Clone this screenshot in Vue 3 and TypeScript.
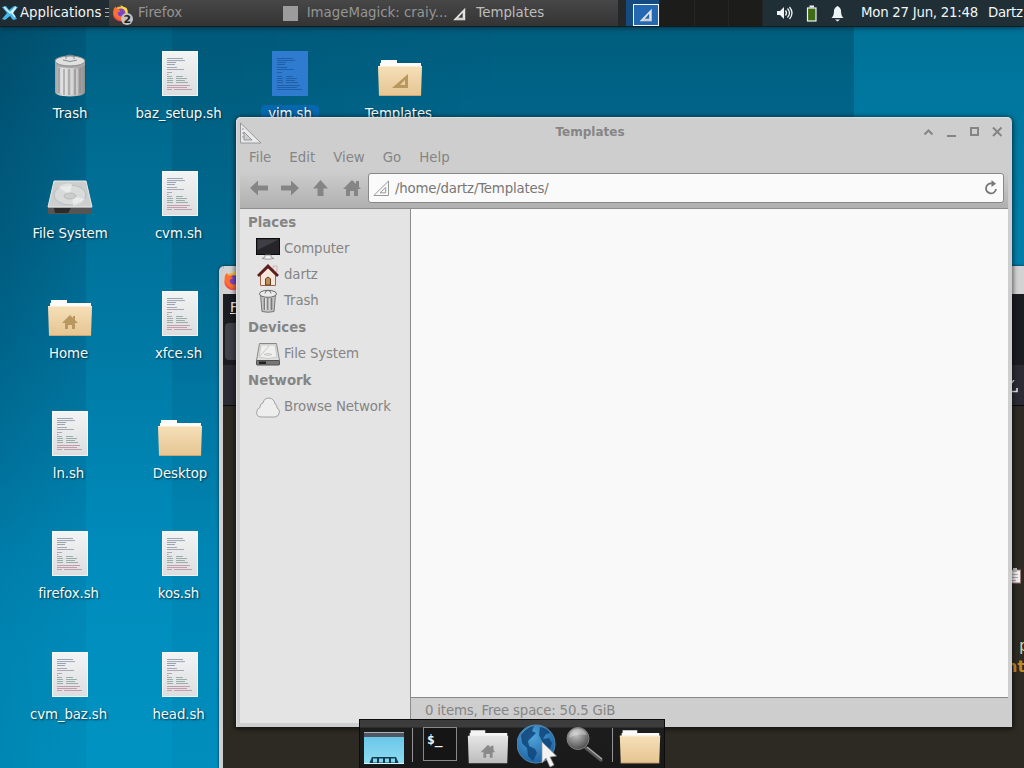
<script setup lang="ts">
interface DesktopItem {
  name: string
  icon: string
  nudge?: boolean
  selected?: boolean
}

const columns: DesktopItem[][] = [
  [
    { name: 'Trash', icon: 'trash' },
    { name: 'File System', icon: 'drive' },
    { name: 'Home', icon: 'folder-home', nudge: true },
    { name: 'ln.sh', icon: 'script', nudge: true },
    { name: 'firefox.sh', icon: 'script', nudge: true },
    { name: 'cvm_baz.sh', icon: 'script', nudge: true },
  ],
  [
    { name: 'baz_setup.sh', icon: 'script', nudge: true },
    { name: 'cvm.sh', icon: 'script', nudge: true },
    { name: 'xfce.sh', icon: 'script', nudge: true },
    { name: 'Desktop', icon: 'folder' },
    { name: 'kos.sh', icon: 'script', nudge: true },
    { name: 'head.sh', icon: 'script', nudge: true },
  ],
  [{ name: 'vim.sh', icon: 'script-selected', selected: true }],
  [{ name: 'Templates', icon: 'folder-templates', nudge: true }],
]

const menus: string[] = ['File', 'Edit', 'View', 'Go', 'Help']

const places = [
  {
    title: 'Places',
    items: [
      { name: 'Computer', icon: 'computer' },
      { name: 'dartz', icon: 'house' },
      { name: 'Trash', icon: 'bin' },
    ],
  },
  { title: 'Devices', items: [{ name: 'File System', icon: 'disk' }] },
  { title: 'Network', items: [{ name: 'Browse Network', icon: 'cloud' }] },
]
</script>

<template>
  <div class="screen">
    <svg class="defs" width="0" height="0">
      <defs>
        <linearGradient id="paper" x1="0" y1="0" x2="0" y2="1"><stop offset="0" stop-color="#f3f4f4" /><stop offset="1" stop-color="#dcdddf" /></linearGradient>
        <linearGradient id="tan" x1="0" y1="0" x2="0" y2="1"><stop offset="0" stop-color="#f6dfb8" /><stop offset="1" stop-color="#e5c592" /></linearGradient>
        <linearGradient id="silver" x1="0" y1="0" x2="0" y2="1"><stop offset="0" stop-color="#e6e6e6" /><stop offset="1" stop-color="#bcbcbc" /></linearGradient>
        <linearGradient id="can" x1="0" y1="0" x2="1" y2="0"><stop offset="0" stop-color="#a0a0a0" /><stop offset=".25" stop-color="#dfdfdf" /><stop offset=".6" stop-color="#c8c8c8" /><stop offset="1" stop-color="#8f8f8f" /></linearGradient>
        <linearGradient id="sky" x1="0" y1="0" x2="0" y2="1"><stop offset="0" stop-color="#63c3e6" /><stop offset="1" stop-color="#8fdcf2" /></linearGradient>
        <radialGradient id="globe" cx=".4" cy=".3" r=".8"><stop offset="0" stop-color="#51a5dc" /><stop offset="1" stop-color="#155a9c" /></radialGradient>
        <radialGradient id="lens" cx=".4" cy=".3" r=".7"><stop offset="0" stop-color="#c8c8c8" /><stop offset="1" stop-color="#4e4e4e" /></radialGradient>
        <linearGradient id="flame" x1=".8" y1="0" x2=".2" y2="1"><stop offset="0" stop-color="#ffd93a" /><stop offset=".5" stop-color="#ff8a28" /><stop offset="1" stop-color="#f0355a" /></linearGradient>
      </defs>
      <symbol id="script" viewBox="0 0 48 48">
        <rect x="6" y="1" width="36" height="45" fill="url(#paper)" />
        <path d="M6.500 1.500h35v44h-35z" fill="none" stroke="#fff" stroke-opacity=".6" />
        <g fill="none" stroke-width=".8" opacity=".72">
          <path stroke="#5f6f8c" d="M11 8.500h16M11 10.600h18M11 12.500h9M11 14.500h8" />
          <path stroke="#80738e" d="M11 17.500h10M11 19.500h17M11 22.500h5M11 24.500h1.500" />
          <path stroke="#668478" d="M11 26.500h5M20 26.500h7M11 28.500h6M20 28.500h11M11 30.500h6M20 30.500h9M11 32.500h6M20 32.500h12" />
          <path stroke="#b06b85" d="M11 35.500h23M11 37.500h20M11 39.500h5M18 39.500h18" />
        </g>
      </symbol>
      <symbol id="script-selected" viewBox="0 0 48 48">
        <rect x="6" y="1" width="36" height="45" fill="#2f7bd0" />
        <path d="M11 8.500h16M11 10.500h18M11 12.500h9M11 14.500h8M11 17.500h10M11 19.500h17M11 22.500h5M11 26.500h5M20 26.500h7M11 28.500h6M20 28.500h11M11 30.500h6M20 30.500h9M11 32.500h6M20 32.500h12M11 35.500h23M11 37.500h20M11 39.500h25" stroke="#1d559c" stroke-width=".9" opacity=".85" />
      </symbol>
      <symbol id="folder" viewBox="0 0 48 48">
        <path d="M5 10h16v3h24v6H4v-6h1z" fill="#fbfbfa" />
        <path d="M2 16h44v1l-1 29H3L2 17z" fill="url(#tan)" /><path d="M2 16.500h44" stroke="#fbecd0" />
        <path d="M3 45.500h42" stroke="#cfa66f" />
      </symbol>
      <symbol id="folder-home" viewBox="0 0 48 48">
        <use href="#folder" width="48" height="48" />
        <path d="M16 33l8-8 3 3v-2h2v4l3 3h-3v6h-3v-4h-4v4h-3v-6z" fill="#b99860" />
      </symbol>
      <symbol id="folder-templates" viewBox="0 0 48 48">
        <use href="#folder" width="48" height="48" />
        <path fill-rule="evenodd" d="M16 38L32 24v14zm8-3h5v-5z" fill="#b99860" />
      </symbol>
      <symbol id="folder-silver" viewBox="0 0 48 48">
        <path d="M5 10h16v3h24v6H4v-6h1z" fill="#f4f4f4" />
        <path d="M2 16h44l-1 30H3z" fill="url(#silver)" />
        <path d="M16 34l8-8 3 3v-2h3v5l2 2h-3v6h-3v-4h-4v4h-3v-6z" fill="#8a8a8a" />
      </symbol>
      <symbol id="trash" viewBox="0 0 48 48">
        <path d="M9 11h30v31q0 4-15 4.500Q9 46 9 42z" fill="url(#can)" />
        <path d="M13 18v25M18 19v26M23 19v26M29 19v26M34 18v25" stroke="#808080" stroke-opacity=".45" stroke-width="2" />
        <path d="M15 18v25M20 19v26M26 19v26M31 19v26" stroke="#eee" stroke-opacity=".7" />
        <path d="M9 12v3q3 3 15 3t15-3v-3" fill="#a9a9a9" />
        <ellipse cx="24" cy="11" rx="15" ry="5" fill="#dfe0e0" stroke="#8c8f90" />
        <path d="M20 9V6q4-2 8 0v3M17 10q7 3 14 0" fill="none" stroke="#8a8a8a" />
      </symbol>
      <symbol id="drive" viewBox="0 0 48 48">
        <path d="M8 11h32l6 26H2z" fill="#cccfce" stroke="#e9e9e9" />
        <ellipse cx="24" cy="25" rx="16" ry="10" fill="#d9dbda" stroke="#b4b6b6" stroke-width=".8" />
        <path d="M24 25L12 17q7-5 14-3zM26 26l13 3q-5 6-12 7z" fill="#f3f3f3" opacity=".6" />
        <ellipse cx="24" cy="26" rx="6" ry="3" fill="#cbcdcd" stroke="#b2b2b2" stroke-width=".8" />
        <path d="M2 37h44v6q0 1-1 1H3q-1 0-1-1z" fill="#555" /><path d="M8 38h17l-3 5H9z" fill="#2b2b2b" /><path d="M2 37.500h44" stroke="#aaa" />
      </symbol>
      <symbol id="computer" viewBox="0 0 24 24">
        <rect x=".5" y="1.500" width="23" height="16" fill="#26262a" stroke="#0c0c0c" />
        <path d="M1.500 2.500h21L1.500 13z" fill="#494950" opacity=".7" />
        <path d="M9 18h6v2l3 1.500q-6 1.500-12 0L9 20z" fill="#f1f1f1" stroke="#8a8a8a" stroke-width=".8" />
      </symbol>
      <symbol id="house" viewBox="0 0 24 24">
        <path d="M17 3h4v6h-4z" fill="#e9dede" stroke="#c5a9a4" stroke-width=".7" />
        <path d="M4.500 12L12 5l7.500 7v10.500h-15z" fill="#f6e6dc" stroke="#a4604f" />
        <path d="M2 13L12 3l10 10" fill="none" stroke="#5b1d1d" stroke-width="2.800" />
        <path d="M9.500 22v-6q2.500-3.500 5 0v6z" fill="#bf8d55" stroke="#624220" />
      </symbol>
      <symbol id="bin" viewBox="0 0 24 24">
        <path d="M4.500 5.500h15l-1.500 17q-6 1.500-12 0z" fill="#c4c5c4" stroke="#777" />
        <path d="M8.500 9v12M12 9v12M15.500 9v12" stroke="#7c7c7c" stroke-width="1.600" />
        <path d="M9.500 9v12M13 9v12" stroke="#fff" stroke-width=".6" />
        <ellipse cx="12" cy="4.800" rx="8.500" ry="3.500" fill="#eaebea" stroke="#6a6a6a" />
        <path d="M9 4.500q0-3 3-3t3 3" fill="none" stroke="#777" />
      </symbol>
      <symbol id="disk" viewBox="0 0 24 24">
        <path d="M3.500 1.500h17l3 17H.5z" fill="#dededd" stroke="#888" />
        <path d="M5 3h14l2 12q-9 3-18 0z" fill="#efefee" stroke="#bbb" stroke-width=".7" />
        <path d="M4 14L13 4M8 12.500q4-2 8 0-4 2-8 0" fill="none" stroke="#c6c6c6" />
        <rect x=".5" y="18.500" width="23" height="4.500" rx=".7" fill="#777" stroke="#505050" /><path d="M3 19.500h7v2.500H3z" fill="#222" />
      </symbol>
      <symbol id="cloud" viewBox="0 0 24 24">
        <path d="M5 22Q.5 21.500.6 17.500.8 13.500 4 12.500 3.500 9 7 8q1-5 6-5 5 .5 6 6 2.500.5 2 4 2.500 1 2.500 4-.5 4.500-4.500 5z" fill="#eee" stroke="#999" stroke-width=".9" />
      </symbol>
      <symbol id="square" viewBox="0 0 22 22">
        <path fill-rule="evenodd" d="M1 21L20 1v20zM9 17h7V9z" fill="#e2e2df" /><path d="M6 19h12" stroke="#aaa" />
      </symbol>
      <symbol id="fox" viewBox="0 0 24 24">
        <circle cx="12" cy="12.500" r="10.500" fill="url(#flame)" />
        <circle cx="13" cy="11" r="6" fill="#7b45c9" />
        <path d="M2 8q0-4 3-6 0 3 3 4 3 0 4 3-4 0-4 3 1 5 6 4 5-1 4-8 4 5 0 10-6 5-12 0-4-4-4-10z" fill="#ff7030" />
        <path d="M12 0q1 5 5 6 3 3 3 9 4-7 0-11-4-1-8-4z" fill="#ffdc45" />
      </symbol>
    </svg>

    <div class="bands"></div>

    <div class="desktop">
      <div v-for="(col, c) in columns" :key="c" class="column">
        <div v-for="item in col" :key="item.name" class="tile" :class="{ nudge: item.nudge, selected: item.selected }">
          <svg width="48" height="48"><use :href="'#' + item.icon" /></svg>
          <span>{{ item.name }}</span>
        </div>
      </div>
    </div>

    <section class="browser">
      <div class="browser-title"><svg width="20" height="20"><use href="#fox" /></svg></div>
      <div class="browser-menu"><u>F</u>ile</div>
      <div class="browser-tabs"><i></i></div>
      <div class="browser-nav"><svg width="14" height="14" viewBox="0 0 14 14"><path d="M9 0L4 6v2h3M5 11.500h7V8" fill="none" stroke="#e8e8ee" stroke-width="1.500" /></svg></div>
      <div class="browser-page">
        <svg class="clip" width="13" height="16" viewBox="0 0 13 16"><rect x=".5" y="2" width="11" height="13" fill="#f0eeee" stroke="#9a7777" /><path d="M4 0h4v4H4z" fill="#bbb" /><path d="M3 6.500h6M3 9.500h6M3 12.500h4" stroke="#aaa" /></svg>
        <div class="code"><span>p</span><b>nt</b></div>
      </div>
    </section>

    <section class="window">
      <header class="titlebar">
        <svg class="corner" width="22" height="22" viewBox="0 0 22 22"><path fill-rule="evenodd" d="M.5 1v20H21zM4 10v8h8z" fill="#e9e9eb" stroke="#8f9094" stroke-width=".9" /><path d="M2 7h2M2 11h2M2 15h2" stroke="#999" /></svg>
        <h1>Templates</h1>
        <svg class="controls" width="82" height="14" viewBox="0 0 82 14" fill="none" stroke="#858585" stroke-width="2">
          <path d="M3.500 9.500l4-4 4 4M26 11h9M50 3h7v7h-7zM72 2.500l8.500 8.500M80.500 2.500L72 11" />
        </svg>
      </header>
      <nav class="menubar"><span v-for="m in menus" :key="m">{{ m }}</span></nav>
      <div class="toolbar">
        <svg width="112" height="18" viewBox="0 0 112 18" fill="#858585">
          <path d="M0 9l8-7.500V6.500h10v5H8v5zM49 9l-8-7.500v5H31v5h10v5zM70.500 1L78 9.500h-4.500V17h-6V9.500H63zM93 10l9-9 4 4V2h3v6l2 2h-3v7h-4v-5h-4v5h-4v-7z" />
        </svg>
        <div class="path">
          <svg width="16" height="16" viewBox="0 0 16 16" fill="none" stroke="#999"><path d="M.8 15.500L15.500 1v14.500zM7 12.800h5.700V7.500z" /></svg>
          <span>/home/dartz/Templates/</span>
          <svg width="14" height="16" viewBox="0 0 14 16"><path d="M8 3.500A5 5 0 1 0 12 9" fill="none" stroke="#777" stroke-width="1.800" /><path d="M7.500 0L12 3.700 7.500 7z" fill="#777" /></svg>
        </div>
      </div>
      <div class="content">
        <aside>
          <template v-for="group in places" :key="group.title">
            <h2>{{ group.title }}</h2>
            <div v-for="p in group.items" :key="p.name" class="place"><svg width="24" height="24"><use :href="'#' + p.icon" /></svg>{{ p.name }}</div>
          </template>
        </aside>
        <main><div class="files"></div><footer>0 items, Free space: 50.5 GiB</footer></main>
      </div>
    </section>

    <header class="panel">
      <div class="apps">
        <svg width="16" height="16" viewBox="0 0 16 16"><path d="M0 2l4-1 3 4 5-4 4 1-5 6 4 6-4 1-3-4-5 4-3-1 5-6z" fill="#43b8ed" /><path d="M2 2l6 6 4-4 2-2-4 6 3 4" fill="none" stroke="#d9f3ff" stroke-width="1.500" /></svg>
        <span>Applications</span>
        <svg width="6" height="12" viewBox="0 0 6 12" stroke="#a0a5a5"><path d="M1 1.500h4M1 5.500h4M1 9.500h4" /></svg>
      </div>
      <div class="tasks">
        <div class="task fox">
          <svg width="22" height="22" viewBox="0 0 22 22"><use href="#fox" width="17" height="17" y="1" /><circle cx="15" cy="15" r="6" fill="#c3c3c3" /><text x="11.600" y="19" font-size="11" font-weight="bold" fill="#222">2</text></svg>
          <span>Firefox</span>
        </div>
        <div class="task magick"><i></i><span>ImageMagick: craiy...</span></div>
        <div class="task active"><svg width="15" height="14"><use href="#square" /></svg><span>Templates</span></div>
      </div>
      <div class="pager">
        <div class="workspace current"><div class="mini"><svg width="14" height="14"><use href="#square" /></svg></div></div>
        <div class="workspace"></div><div class="workspace"></div><div class="workspace"></div>
      </div>
      <div class="tray">
        <svg width="68" height="17" viewBox="0 0 68 17" fill="none">
          <path d="M0 6h3l4-4v12l-4-4H0z" fill="#eef4f5" /><path d="M8.500 5.500q2 2.500 0 5M10.500 3.500q4 4.500 0 9M12.500 2q5 6 0 12" stroke="#eef4f5" stroke-width="1.300" />
          <rect x="30.500" y="3" width="8.500" height="13" fill="#3e6b14" stroke="#eef4f5" stroke-width="1.200" /><path d="M32.500 1.500h4.500" stroke="#eef4f5" stroke-width="2" />
          <path d="M54.500 13Q57 11 57 6q0-3 3.500-5 3.500 2 3.500 5 0 5 2.500 7z" fill="#eef4f5" /><path d="M58 14.500h5l-2.500 2z" fill="#eef4f5" />
        </svg>
        <span class="clock">Mon 27 Jun, 21:48</span><span class="user">Dartz</span>
      </div>
    </header>

    <div class="dock">
      <svg class="show" width="40" height="36" viewBox="0 0 40 36"><path d="M0 4h40v32H0z" fill="url(#sky)" /><path d="M0 4h40v5H0z" fill="#505662" /><path d="M0 4.500h40" stroke="#aab2b8" /><path d="M5 36l3-7h24l3 7z" fill="#143b50" /><path d="M9 32.500h22" stroke="#7fd6ee" stroke-width="4" stroke-dasharray="4 2" /><path d="M0 35.500h40" stroke="#d5f7ff" /></svg>
      <i class="sep"></i>
      <div class="terminal">$_</div>
      <svg class="homedir" width="44" height="44"><use href="#folder-silver" /></svg>
      <svg class="web" width="42" height="46" viewBox="0 0 42 46">
        <circle cx="19" cy="20" r="19" fill="url(#globe)" stroke="#5689ad" />
        <path d="M4 11q6-8 13-9l-2 5 4 2-5 5-3 3 1 5 6 3 2 4-4 8-5-5-1-8-5-5zM23 3q7 1 10 6l-4 1-3 5 6-1 3 5-2 6-5-2-3-6-3-6z" fill="#114579" opacity=".85" />
        <path d="M25 18l14.500 14-6.500 1 4 8-4 2-4-9-4 5z" fill="#f3f3f3" stroke="#999" stroke-width=".7" />
      </svg>
      <svg class="search" width="40" height="40" viewBox="0 0 40 40"><path d="M21 23l15 12" stroke="#595959" stroke-width="3.500" stroke-linecap="round" /><path d="M22 22l15 12" stroke="#aaa" stroke-width="1.500" /><circle cx="13" cy="13.500" r="11" fill="url(#lens)" stroke="#808080" /><path d="M4 13Q5 4 14 4q7 1 8 6-10-2-18 3z" fill="#eee" opacity=".35" /></svg>
      <i class="sep"></i>
      <svg class="last" width="44" height="44"><use href="#folder" /></svg>
    </div>
  </div>
</template>

<style>
body { overflow: hidden; }
</style>

<style scoped>
.screen {
  position: relative; width: 1024px; height: 768px; overflow: hidden;
  font: 13.333px/17px "DejaVu Sans", sans-serif;
  background: linear-gradient(180deg, #006082 26px, #006c92 150px, #007aa5 350px, #008cbc 560px, #0093c2 768px);
}
.bands {
  position: absolute; inset: 0;
  background: linear-gradient(90deg, rgba(0, 25, 45, .26), rgba(0, 30, 50, .12) 86px, transparent 86px, transparent 172px, rgba(0, 30, 45, .1) 172px, rgba(0, 30, 45, .1) 236px, rgba(0, 25, 40, .04) 500px, rgba(0, 25, 40, .04) 854px, rgba(0, 145, 190, .38) 854px);
  mask-image: linear-gradient(#000 250px, rgba(0, 0, 0, .35) 650px);
}
.defs { position: absolute; }
svg { flex: none; display: block; }
.desktop { position: absolute; left: 15px; top: 50px; display: flex; }
.column { width: 110px; }
.tile { height: 120px; display: flex; flex-direction: column; align-items: center; color: #f2fafc; text-shadow: 1px 1px 2px #012b3d; }
.tile:nth-child(6) { margin-top: 1px; }
.tile span { margin-top: 7px; padding: 0 7px; white-space: nowrap; line-height: 18px; letter-spacing: -.1px; }
.tile.nudge span { margin-right: 3px; }
.selected span { background: #0767ad; border-radius: 4px; }

.browser { position: absolute; left: 219px; top: 266px; width: 805px; height: 502px; box-sizing: border-box; border-left: 4px solid #cfcfcf; border-radius: 5px 0 0; background: #2d2a22; overflow: hidden; box-shadow: 0 0 3px #123; }
.browser-title { height: 28px; background: #d2d2d2; display: flex; align-items: center; }
.browser-title svg { margin-top: 2px; }
.browser-menu { height: 27px; background: #1b1b22; color: #f3f3f5; padding-left: 7px; line-height: 27px; }
.browser-tabs { height: 44px; background: #1b1b22; padding: 2px 0 0 2px; box-sizing: border-box; }
.browser-tabs i { display: block; width: 40px; height: 37px; border-radius: 4px; background: #41414a; }
.browser-nav { height: 41px; background: #2c2b34; border-bottom: 1px solid #0b0b0d; display: flex; justify-content: flex-end; align-items: center; padding: 4px 5px 0 0; box-sizing: border-box; }
.browser-page { display: flex; flex-direction: column; align-items: flex-end; background: #2d2a23; height: 362px; }
.clip { margin: 162px 2px 0 0; }
.code { margin-top: 51px; width: 17px; line-height: 21px; font-size: 16px; color: #cfcaa6; display: flex; flex-direction: column; }
.code span { padding-left: 12px; }
.code b { color: #bd8a2b; margin-left: -1px; }

.window { position: absolute; left: 236px; top: 117px; width: 776px; height: 610px; box-sizing: border-box; padding: 0 4px 4px; border-radius: 5px 5px 0 0; background: #cecece; box-shadow: 0 1px 5px 1px rgba(0, 0, 0, .6), inset 1px 1px #dedede; color: #858585; display: flex; flex-direction: column; }
.titlebar { height: 29px; display: grid; grid-template-columns: 100px 1fr 100px; align-items: center; }
.corner { margin-top: 2px; }
h1 { margin: 2px 0 0; text-align: center; font-size: 12px; line-height: 17px; padding-right: 68px; }
.controls { justify-self: end; margin-right: 5px; }
.menubar { height: 24px; display: flex; gap: 18px; padding-left: 9px; line-height: 24px; }
.toolbar { height: 38px; background: linear-gradient(#cecece, #b0b0b0); border-bottom: 1px solid #8e8e8e; display: flex; align-items: flex-start; }
.toolbar > svg { margin: 9px 6px 0 10px; }
.path { flex: 1; margin: 3px 4px 0 0; height: 28px; border: 1px solid #888; border-radius: 3px; background: #fafafa; display: flex; align-items: center; padding: 0 5px 0 4px; color: #777; }
.path span { flex: 1; margin-left: 6px; letter-spacing: -.2px; }
.content { flex: 1; display: flex; min-height: 0; }
aside { width: 170px; background: #e4e4e4; border-right: 1px solid #8c8c8c; }
h2 { margin: 0 0 0 8px; font-size: 13.333px; line-height: 27px; height: 26.5px; }
.place { height: 26.2px; display: flex; align-items: center; gap: 4px; padding-left: 16px; letter-spacing: -.12px; }
.place svg { margin-top: 1px; }
main { flex: 1; display: flex; flex-direction: column; }
.files { flex: 1; background: #f9f9f9; }
footer { height: 25px; border-top: 1px solid #888; padding-left: 14px; line-height: 25px; letter-spacing: -.19px; }

.panel { position: absolute; inset: 0 0 auto; height: 26px; display: flex; background: #202f36; border-bottom: 1px solid #151c20; box-shadow: 0 1px 5px rgba(0, 20, 30, .6); color: #f1f6f7; line-height: 25px; white-space: nowrap; }
.panel > div { flex: none; }
.apps { width: 107px; padding-left: 2px; display: flex; align-items: center; gap: 2px; background: #202c32; }
.apps span, .task span { margin-top: -1px; }
.apps svg:last-child { margin-left: 1px; }
.tasks { width: 509px; background: linear-gradient(#474747, #343434); display: flex; color: #959595; }
.task { width: 170px; display: flex; align-items: center; }
.fox svg { margin: 3px 4px 0 3px; }
.magick i { width: 15px; height: 15px; background: #9c9c9c; margin: 0 9px 0 4px; }
.active { color: #bdbdbd; }
.active svg { margin: 2px 9px 0 4px; }
.pager { width: 145px; display: flex; padding-left: 8px; box-sizing: border-box; background: #242829; }
.workspace { flex: 1; background: #1c1c1b; border-right: 1px solid #252626; }
.workspace.current { background: #164b80; }
.mini { width: 24px; height: 20px; border: 1px solid #f4f4f4; margin: 4px 0 0 7px; background: #2468b4; display: flex; align-items: center; justify-content: center; }
.tray { display: flex; padding-left: 14px; }
.tray svg { margin: 5px 16px 0 0; }
.clock { letter-spacing: -.25px; width: 127px; }
.user { letter-spacing: -.3px; }

.dock { position: absolute; left: 359px; top: 719px; width: 306px; height: 49px; box-sizing: border-box; display: flex; align-items: flex-start; border: 1px solid #0c0c0c; border-bottom: 0; background: linear-gradient(#3c3c3c 7px, #1d1d1d 8px, #191919); }
.show { margin: 8px 8px 0 4px; }
.sep { width: 1px; height: 34px; background: #949494; margin-top: 8px; }
.terminal { width: 32px; height: 32px; border: 1px solid #888; margin: 7px 9px 0 10px; background: #151515; color: #f4f4f4; font: bold 13px/24px "DejaVu Sans Mono", monospace; text-indent: 3px; }
.homedir { margin-top: 1px; }
.web { margin: 4px 0 0 7px; }
.search { margin: 5px 0 0 6px; }
.dock .search + .sep { margin-left: 7px; }
.last { margin: 1px 0 0 5px; }
</style>
